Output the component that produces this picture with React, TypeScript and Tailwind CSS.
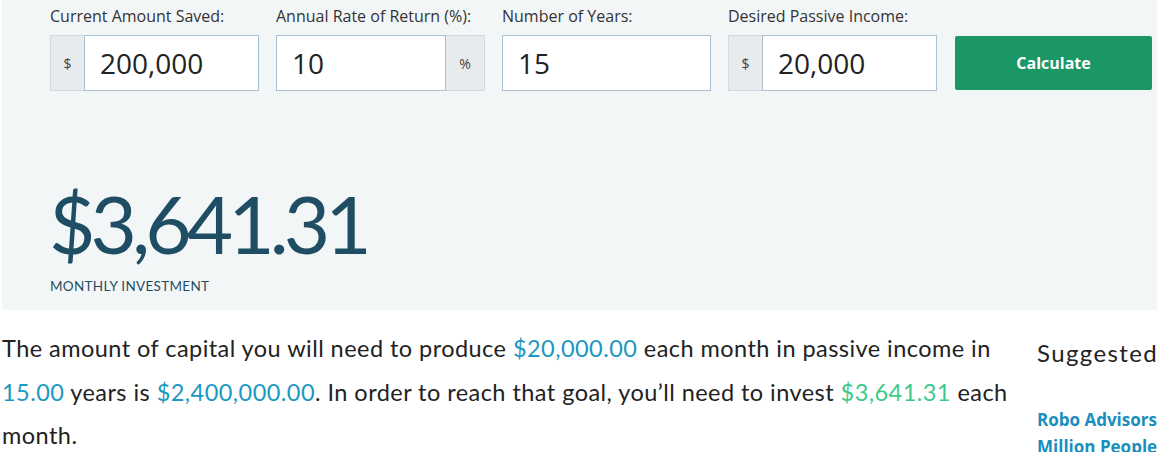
import React from 'react';

const labelCls = "block text-[16px] leading-[22px] text-[#333] mb-[8px] whitespace-nowrap";

const Field = ({
  label,
  value,
  prefix,
  suffix,
}: {
  label: string;
  value: string;
  prefix?: string;
  suffix?: string;
}) => (
  <div className="w-[209px] shrink-0">
    <label className={labelCls}>{label}</label>
    <div className="flex h-[56px]">
      {prefix && (
        <span className="flex w-[34px] items-center justify-center border border-r-0 border-[#d3d8dd] bg-[#e8ebee] text-[14px] text-[#444]">
          {prefix}
        </span>
      )}
      <div className="flex flex-1 items-center border border-[#a9c1d6] bg-white px-[15px] text-[28px] text-[#222]">
        {value}
      </div>
      {suffix && (
        <span className="flex w-[39px] items-center justify-center border border-l-0 border-[#d3d8dd] bg-[#e8ebee] text-[14px] text-[#444]">
          {suffix}
        </span>
      )}
    </div>
  </div>
);

export default function App() {
  return (
    <div className="w-[1157px] h-[452px] overflow-hidden bg-white font-['Open_Sans',sans-serif]">
      {/* calculator panel */}
      <div className="ml-[2px] h-[310px] bg-[#f3f6f7] pl-[48px] pt-[5px]">
        <div className="flex items-end gap-[17px]">
          <Field label="Current Amount Saved:" value="200,000" prefix="$" />
          <Field label="Annual Rate of Return (%):" value="10" suffix="%" />
          <Field label="Number of Years:" value="15" />
          <Field label="Desired Passive Income:" value="20,000" prefix="$" />
          <button className="mb-[1px] ml-[1px] h-[54px] w-[197px] shrink-0 rounded-[2px] bg-[#1a9764] text-[16px] font-bold text-white">
            Calculate
          </button>
        </div>

        <div className="mt-[92px] font-['Lato',sans-serif] text-[#1f4d63]">
          <div className="-ml-[1px] text-[80px] leading-[80px] tracking-[-4.9px]">$3,641.31</div>
          <div className="mt-[13px] text-[13.5px] uppercase tracking-[0.3px]">Monthly Investment</div>
        </div>
      </div>

      {/* result text */}
      <div className="flex">
        <p className="w-[1012px] shrink-0 pl-[2px] pt-[17px] font-['Lato',sans-serif] text-[23.5px] leading-[43.5px] tracking-[0.45px] text-[#222]">
          The amount of capital you will need to produce{' '}
          <span className="text-[#1a98c2]">$20,000.00</span> each month in passive income in{' '}
          <span className="text-[#1a98c2]">15.00</span> years is{' '}
          <span className="text-[#1a98c2]">$2,400,000.00</span>. In order to reach that goal, you’ll need to
          invest <span className="text-[#3ec98a]">$3,641.31</span> each month.
        </p>
        <aside className="ml-[25px] shrink-0 pt-[28px] whitespace-nowrap">
          <h3 className="font-['Lato',sans-serif] text-[24px] leading-[30px] tracking-[1.4px] text-[#222]">Suggested Reading</h3>
          <div className="mt-[38px] text-[17px] font-bold leading-[27px] text-[#1a8fbd]">
            <a className="block">Robo Advisors</a>
            <a className="block">Million People</a>
          </div>
        </aside>
      </div>
    </div>
  );
}
